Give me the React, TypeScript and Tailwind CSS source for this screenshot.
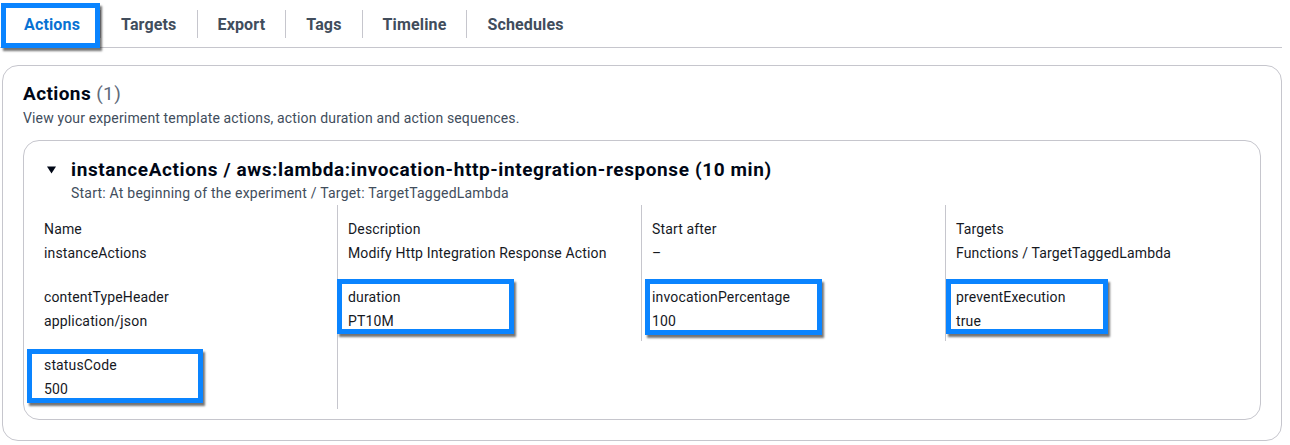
import React from "react";

type Box = { left: number; top: number; width: number; height: number };

function KV({ label, value, box }: { label: string; value: string; box?: Box }) {
  return (
    <div className="relative">
      <div className="leading-6">{label}</div>
      <div className="leading-6">{value}</div>
      {box && (
        <div
          className="pointer-events-none absolute border-[5px] border-[#0a84ff] shadow-[2px_3px_2px_rgba(0,0,0,0.55)]"
          style={{ left: box.left, top: box.top, width: box.width, height: box.height }}
        />
      )}
    </div>
  );
}

function Cell({ children, last }: { children?: React.ReactNode; last?: boolean }) {
  return (
    <div className={`pl-[10px] pt-3 pb-2 ${last ? "" : "border-r border-[#c6c6cd]"}`}>{children}</div>
  );
}

export default function App() {
  const tabs = ["Actions", "Targets", "Export", "Tags", "Timeline", "Schedules"];
  return (
    <div
      className="w-[1290px] h-[445px] bg-white text-[#16191f] text-[14px] tracking-[0.15px]"
      style={{ fontFamily: "Roboto, 'Liberation Sans', sans-serif" }}
    >
      {/* Tabs */}
      <div className="w-[1282px] h-[48px] border-b border-[#c6c6cd] flex items-center pl-[4px]">
        {tabs.map((t, i) => (
          <div key={t} className="flex items-center h-full">
            {i > 0 && <div className="w-px h-[28px] bg-[#c6c6cd]" />}
            <div
              className={`relative h-full flex items-center pt-[3px] px-5 text-[16px] tracking-[0.15px] font-bold ${
                i === 0 ? "text-[#0972d3]" : "text-[#414d5c]"
              }`}
            >
              {t}
              {i === 0 && (
                <div className="pointer-events-none absolute left-[-3px] top-[3px] w-[99px] h-[45px] border-[5px] border-[#0a84ff] shadow-[2px_3px_2px_rgba(0,0,0,0.55)]" />
              )}
            </div>
          </div>
        ))}
      </div>

      {/* Outer container */}
      <div className="ml-[2px] mt-[17px] w-[1280px] border border-[#c6c6cd] rounded-[16px] px-5 pt-[17px] pb-5">
        <div className="leading-[22px] text-[19px] tracking-[0.4px] font-bold text-[#000716]">
          Actions <span className="font-normal text-[#5f6b7a]">(1)</span>
        </div>
        <div className="leading-5 mt-[3px] text-[14px] tracking-[0.15px] text-[#414d5c]">
          View your experiment template actions, action duration and action sequences.
        </div>

        {/* Inner card */}
        <div className="mt-3 border border-[#c6c6cd] rounded-[16px] px-[10px] pt-[17px] pb-[10px]">
          <div className="pl-[13px] flex items-center gap-[15px]">
            <svg width="9" height="8" viewBox="0 0 9 8" className="shrink-0">
              <path d="M0 0.5 H9 L4.5 7.5 Z" fill="#000716" />
            </svg>
            <div className="leading-6 text-[19px] tracking-[0.6px] font-bold text-[#000716]">
              instanceActions / aws:lambda:invocation-http-integration-response (10 min)
            </div>
          </div>
          <div className="pl-[37px] leading-5 mt-px text-[14px] tracking-[0.22px] text-[#414d5c]">
            Start: At beginning of the experiment / Target: TargetTaggedLambda
          </div>

          <div className="mt-[2px] grid grid-cols-4 w-[1216px]">
            <Cell>
              <KV label="Name" value="instanceActions" />
            </Cell>
            <Cell>
              <KV label="Description" value="Modify Http Integration Response Action" />
            </Cell>
            <Cell>
              <KV label="Start after" value="–" />
            </Cell>
            <Cell last>
              <KV label="Targets" value="Functions / TargetTaggedLambda" />
            </Cell>

            <Cell>
              <KV label="contentTypeHeader" value="application/json" />
            </Cell>
            <Cell>
              <KV label="duration" value="PT10M" box={{ left: -11, top: -6, width: 177, height: 55 }} />
            </Cell>
            <Cell>
              <KV
                label="invocationPercentage"
                value="100"
                box={{ left: -7, top: -6, width: 177, height: 56 }}
              />
            </Cell>
            <Cell last>
              <KV
                label="preventExecution"
                value="true"
                box={{ left: -10, top: -6, width: 162, height: 55 }}
              />
            </Cell>

            <Cell>
              <KV label="statusCode" value="500" box={{ left: -17, top: -4, width: 176, height: 54 }} />
            </Cell>
          </div>
        </div>
      </div>
    </div>
  );
}
